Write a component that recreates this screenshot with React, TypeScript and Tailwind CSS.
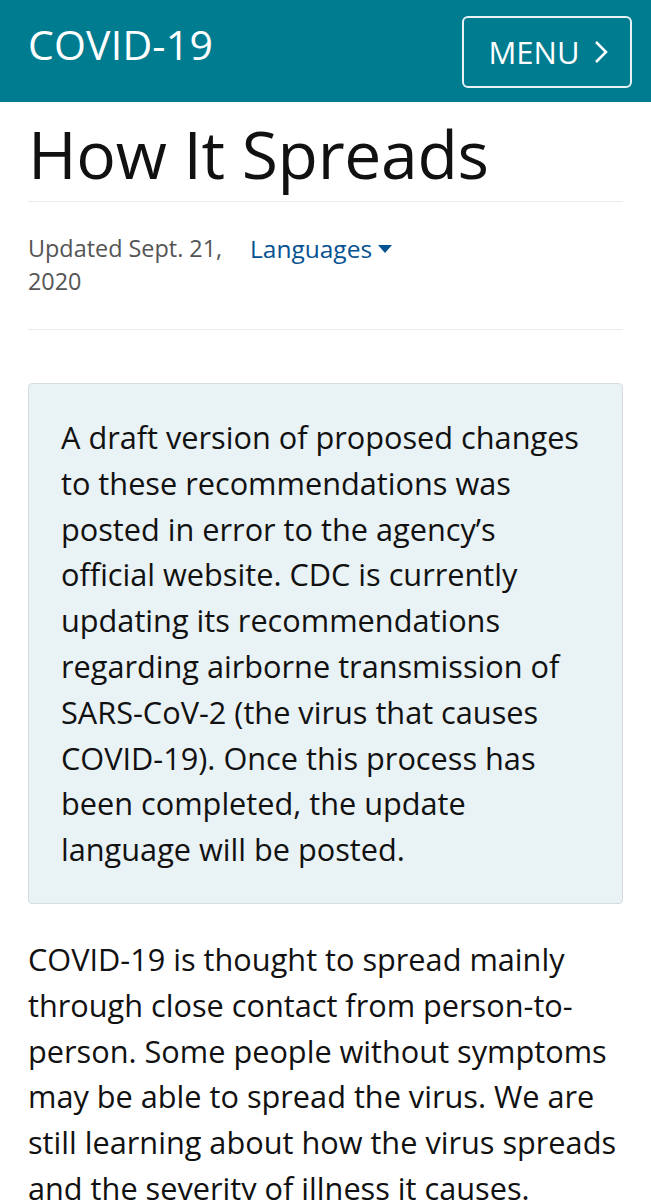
import React from "react";

export default function App() {
  const font = { fontFamily: '"Open Sans", "Noto Sans", sans-serif' };
  return (
    <div className="w-[651px] h-[1200px] overflow-hidden bg-white text-[#111]" style={font}>
      <header className="h-[102px] bg-[#007c91] flex items-start justify-between pl-[28px] pr-[19px]">
        <div className="text-white text-[41px] leading-none tracking-[0.2px] mt-[24px]">COVID-19</div>
        <button className="h-[72px] w-[170px] border-2 border-white/90 rounded-[6px] flex items-center justify-center gap-[14px] text-white text-[31px] mt-[16px] pl-[2px]">
          <span>MENU</span>
          <svg width="14" height="24" viewBox="0 0 14 24" fill="none" stroke="white" strokeWidth="2.5">
            <path d="M2 2 L12 12 L2 22" />
          </svg>
        </button>
      </header>
      <main className="px-[28px]">
        <h1 className="text-[66px] leading-[96px] mt-[3px] tracking-[-0.3px]">How It Spreads</h1>
        <hr className="border-t border-[#e9ecef]" />
        <div className="flex items-start pt-[30px] pb-[31px]">
          <div className="w-[222px] text-[23.4px] leading-[33px] text-[#555]">Updated Sept. 21, 2020</div>
          <a className="text-[24.5px] leading-[33px] text-[#075290] flex items-center gap-[6px]">
            Languages
            <svg width="14" height="8" viewBox="0 0 14 8"><path d="M0 0 L14 0 L7 8 Z" fill="#075290" /></svg>
          </a>
        </div>
        <hr className="border-t border-[#e9ecef]" />
        <div className="mt-[53px] bg-[#e9f2f4] border border-[#d6dde0] rounded-[4px] pl-[32px] pr-[32px] pt-[31px] pb-[30px] text-[30.7px] leading-[45.8px]">
          A draft version of proposed changes to these recommendations was posted in error to the agency’s official website. CDC is currently updating its recommendations regarding airborne transmission of SARS-CoV-2 (the virus that causes COVID-19). Once this process has been completed, the update language will be posted.
        </div>
        <p className="mt-[33px] text-[30.7px] leading-[45.8px]">
          COVID-19 is thought to spread mainly through close contact from person-to-person. Some people without symptoms may be able to spread the virus. We are still learning about how the virus spreads and the severity of illness it causes.
        </p>
      </main>
    </div>
  );
}
